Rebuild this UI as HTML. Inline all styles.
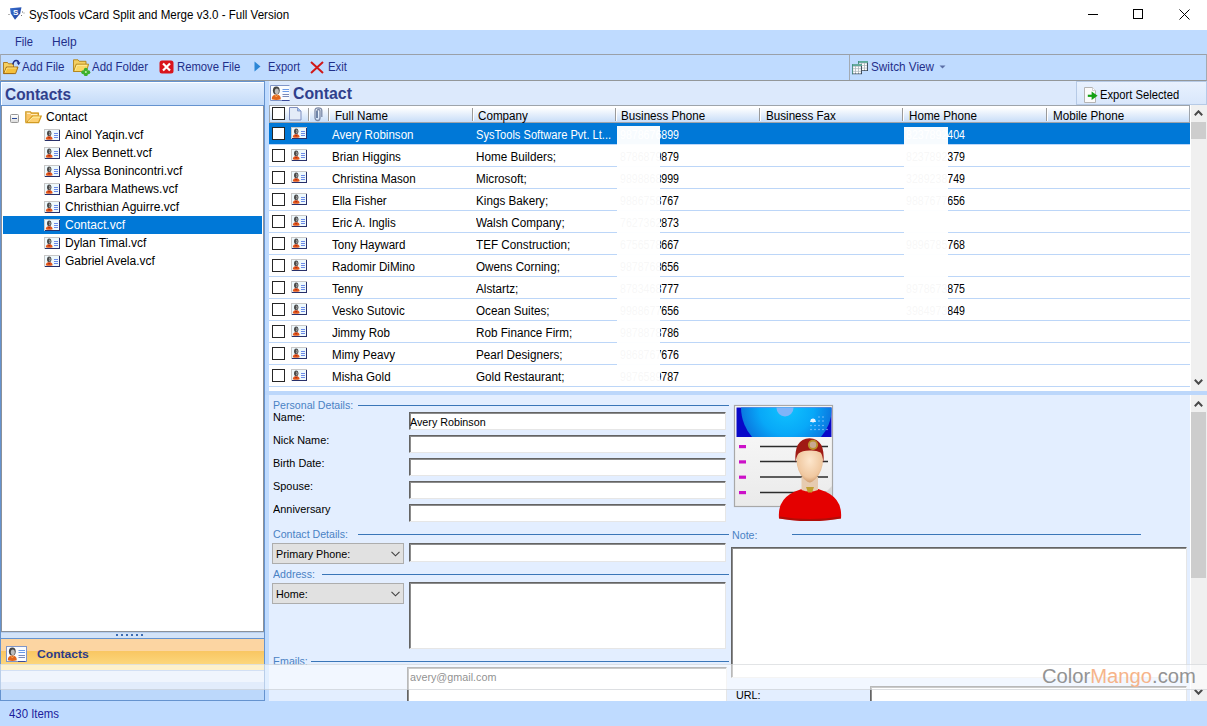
<!DOCTYPE html>
<html><head><meta charset="utf-8">
<style>
*{box-sizing:border-box;margin:0;padding:0}
html,body{width:1207px;height:726px;overflow:hidden;background:#fff;font-family:"Liberation Sans",sans-serif;font-size:12px;color:#000;position:relative}
.a{position:absolute;display:block}
.t{position:absolute;white-space:nowrap;transform-origin:0 0}
</style></head><body>

<div class="a" style="left:0px;top:0px;width:1207px;height:30px;background:#fff"></div>
<svg class="a" style="left:7px;top:6px;" width="18" height="16" viewBox="0 0 18 16"><defs><linearGradient id="sg" x1="0" y1="0" x2="1" y2="1"><stop offset="0" stop-color="#3a6fd0"/><stop offset="1" stop-color="#1c3f9a"/></linearGradient></defs><path d="M3 2.2 L14.5 1.2 L13.2 7.5 L8 13.8 L3.8 7.5 Z" fill="url(#sg)"/><text x="8.6" y="9.2" font-size="8" font-weight="bold" fill="#fff" text-anchor="middle" font-family="Liberation Sans">S</text><rect x="1.5" y="8" width="1" height="1" fill="#666"/><rect x="15" y="5.5" width="1" height="1" fill="#666"/><rect x="16.5" y="6.5" width="1" height="1" fill="#888"/><rect x="14" y="9" width="1" height="1" fill="#777"/></svg>
<div class="t" style="left:29px;top:8px;font-size:12px;line-height:14px;color:#000;transform:scaleX(0.963);">SysTools vCard Split and Merge v3.0 - Full Version</div>
<div class="a" style="left:1088px;top:14px;width:10px;height:1px;background:#000"></div>
<div class="a" style="left:1133px;top:9px;width:10px;height:10px;border:1px solid #000"></div>
<svg class="a" style="left:1179px;top:9px;" width="11" height="11" viewBox="0 0 11 11"><path d="M0.5 0.5 L10.5 10.5 M10.5 0.5 L0.5 10.5" stroke="#000" stroke-width="1"/></svg>
<div class="a" style="left:0px;top:30px;width:1207px;height:24px;background:#bfdbff"></div>
<div class="t" style="left:15px;top:35px;font-size:12px;line-height:14px;color:#1f2f8a;transform:scaleX(0.93);">File</div>
<div class="t" style="left:52px;top:35px;font-size:12px;line-height:14px;color:#1f2f8a;">Help</div>
<div class="a" style="left:0px;top:54px;width:1207px;height:27px;background:#bfdbff;border-top:1px solid #9aa0a8;border-bottom:1px solid #939799;border-right:1px solid #a3aab3"></div>
<div class="a" style="left:0px;top:54px;width:1px;height:27px;background:#a3aab3"></div>
<div class="a" style="left:849px;top:55px;width:1px;height:25px;background:#a3aab3"></div>
<div class="t" style="left:22px;top:60px;font-size:12px;line-height:14px;color:#1f2f8a;transform:scaleX(0.967);">Add File</div>
<div class="t" style="left:92px;top:60px;font-size:12px;line-height:14px;color:#1f2f8a;transform:scaleX(0.955);">Add Folder</div>
<div class="t" style="left:177px;top:60px;font-size:12px;line-height:14px;color:#1f2f8a;transform:scaleX(0.941);">Remove File</div>
<div class="t" style="left:268px;top:60px;font-size:12px;line-height:14px;color:#1f2f8a;transform:scaleX(0.923);">Export</div>
<div class="t" style="left:328px;top:60px;font-size:12px;line-height:14px;color:#1f2f8a;transform:scaleX(0.95);">Exit</div>
<div class="t" style="left:871px;top:60px;font-size:12px;line-height:14px;color:#1f2f8a;transform:scaleX(0.977);">Switch View</div>
<svg class="a" style="left:3px;top:59px;" width="18" height="16" viewBox="0 0 18 16"><path d="M0.5 3.5 H4.5 L5.5 4.8 H10.5 V14.5 H0.5 Z" fill="#f6d060" stroke="#a87418" stroke-width="0.9"/><path d="M0.7 14.6 L3.4 8 H15 L12.6 14.6 Z" fill="#f5c03c" stroke="#9c6410" stroke-width="0.9"/><path d="M2 13.4 L4 9 H13.4" stroke="#fff2a0" stroke-width="0.7" fill="none"/><path d="M9.8 5.5 Q10.6 1.4 13.2 1.4 Q15.4 1.4 15.6 3.8" stroke="#1b2a86" stroke-width="1.5" fill="none"/><path d="M13.6 3.4 L15.7 6.2 L17.5 3.2 Z" fill="#1b2a86"/></svg>
<svg class="a" style="left:73px;top:59px;" width="18" height="17" viewBox="0 0 18 17"><path d="M0.5 0.8 H5 L6.2 2.3 H13 V12.5 H0.5 Z" fill="#f3cf62" stroke="#b08218" stroke-width="0.9"/><path d="M0.7 12.5 L3.2 5.2 H15.6 L13.4 12.5 Z" fill="#fad866" stroke="#b08218" stroke-width="0.9"/><path d="M2 11.5 L4 6.3 H14" stroke="#fff4b0" stroke-width="0.7" fill="none"/><g fill="#3cb02c"><circle cx="12.8" cy="10.8" r="2"/><circle cx="15.3" cy="13.3" r="2"/><circle cx="12.8" cy="15.3" r="2"/><circle cx="10.3" cy="13.3" r="2"/></g><circle cx="12.8" cy="13.1" r="1" fill="#bff0a8"/></svg>
<svg class="a" style="left:159px;top:60px;" width="15" height="14" viewBox="0 0 15 14"><rect x="0.5" y="0.5" width="14" height="13" rx="2.5" fill="#d9141c"/><path d="M4 3.5 L11 10.5 M11 3.5 L4 10.5" stroke="#fff" stroke-width="2.2"/></svg>
<svg class="a" style="left:254px;top:61px;" width="7" height="11" viewBox="0 0 7 11"><path d="M0.5 0.5 L6.5 5.5 L0.5 10.5 Z" fill="#2b86d6"/></svg>
<svg class="a" style="left:310px;top:61px;" width="14" height="13" viewBox="0 0 14 13"><path d="M1 1 L13 12 M13 1 L1 12" stroke="#d01818" stroke-width="2"/></svg>
<svg class="a" style="left:851px;top:60px;" width="18" height="15" viewBox="0 0 18 15"><rect x="7" y="1" width="10" height="10" fill="#2b3a4c"/><rect x="7" y="1" width="9.2" height="9.2" fill="#a9b3ba"/><rect x="7" y="1" width="10" height="1.8" fill="#5eab9a"/><rect x="7" y="1" width="0.8" height="10" fill="#3d8a7c"/><rect x="8.2" y="3.4" width="2" height="1.8" fill="#fff"/><rect x="11.0" y="3.4" width="2" height="1.8" fill="#fff"/><rect x="13.8" y="3.4" width="2" height="1.8" fill="#fff"/><rect x="8.2" y="5.9" width="2" height="1.8" fill="#fff"/><rect x="11.0" y="5.9" width="2" height="1.8" fill="#fff"/><rect x="13.8" y="5.9" width="2" height="1.8" fill="#fff"/><rect x="8.2" y="8.4" width="2" height="1.8" fill="#fff"/><rect x="11.0" y="8.4" width="2" height="1.8" fill="#fff"/><rect x="13.8" y="8.4" width="2" height="1.8" fill="#fff"/><rect x="1" y="4.2" width="10" height="10" fill="#2b3a4c"/><rect x="1" y="4.2" width="9.2" height="9.2" fill="#a9b3ba"/><rect x="1" y="4.2" width="10" height="1.8" fill="#5eab9a"/><rect x="1" y="4.2" width="0.8" height="10" fill="#3d8a7c"/><rect x="2.2" y="6.6" width="2" height="1.8" fill="#fff"/><rect x="5.0" y="6.6" width="2" height="1.8" fill="#fff"/><rect x="7.8" y="6.6" width="2" height="1.8" fill="#fff"/><rect x="2.2" y="9.1" width="2" height="1.8" fill="#fff"/><rect x="5.0" y="9.1" width="2" height="1.8" fill="#fff"/><rect x="7.8" y="9.1" width="2" height="1.8" fill="#fff"/><rect x="2.2" y="11.6" width="2" height="1.8" fill="#fff"/><rect x="5.0" y="11.6" width="2" height="1.8" fill="#fff"/><rect x="7.8" y="11.6" width="2" height="1.8" fill="#fff"/></svg>
<svg class="a" style="left:939px;top:65px;" width="7" height="5" viewBox="0 0 7 5"><path d="M0.5 0.5 L6.5 0.5 L3.5 3.5 Z" fill="#5b6fa6"/></svg>
<div class="a" style="left:0px;top:81px;width:265px;height:620px;background:#bfdbff;border:1px solid #6593cf"></div>
<div class="a" style="left:1px;top:82px;width:263px;height:23px;background:linear-gradient(#e3efff,#c4dbf8);border-top:1px solid #fff;border-left:1px solid #fff"></div>
<div class="a" style="left:1px;top:105px;width:263px;height:1px;background:#6593cf"></div>
<div class="t" style="left:5px;top:86px;font-size:16px;line-height:18px;color:#30408c;font-weight:bold;transform:scaleX(0.964);">Contacts</div>
<div class="a" style="left:1px;top:106px;width:263px;height:526px;background:#fff;border:1px solid #8a9099;border-top:0"></div>
<div class="a" style="left:10px;top:114px;width:9px;height:9px;border:1px solid #969696;border-radius:1.5px;background:linear-gradient(#fff,#dcdcdc)"></div>
<div class="a" style="left:12px;top:118px;width:5px;height:1px;background:#2a4a9a"></div>
<svg class="a" style="left:25px;top:111px;" width="17" height="14" viewBox="0 0 17 14"><rect x="1.2" y="1.5" width="12" height="10" fill="#fcc565"/><path d="M2 2.3 H5 L6 3.3 H12.6" stroke="#fff4d0" stroke-width="1" fill="none"/><path d="M0.8 11.8 V0.9 H5.4 L6.5 2.1 H13.4 V4.8" fill="none" stroke="#d19b22" stroke-width="1.3"/><path d="M1.6 11.6 L7.4 5 H16.3 L13.6 11.6 Z" fill="#fdcf70" stroke="#d19b22" stroke-width="1.2"/><path d="M3 10.6 L7.9 6.1 H15" stroke="#fff6a8" stroke-width="0.9" fill="none"/></svg>
<div class="t" style="left:46px;top:110px;font-size:12px;line-height:14px;color:#000;transform:scaleX(1.0);">Contact</div>
<svg class="a" style="left:44px;top:129px;" width="16" height="12" viewBox="0 0 16 12"><rect x="0" y="0" width="16" height="12" fill="#c8c8c8"/><rect x="1" y="1" width="15" height="11" fill="#28306a"/><rect x="1" y="1" width="14" height="10" fill="#eef8fc"/><ellipse cx="5.2" cy="4.3" rx="2.2" ry="2.9" fill="#4a4a4a"/><path d="M5.6 2.8 Q6.6 4 5.6 6.2" stroke="#c8c8c8" stroke-width="0.9" fill="none"/><path d="M1.8 10.2 Q1.8 7.2 5.2 7.2 Q8.6 7.2 8.6 10.2 Q5.2 11.2 1.8 10.2 Z" fill="#e2561a"/><path d="M4.1 7.4 L5.2 9.2 L6.3 7.4" stroke="#a8200a" stroke-width="0.8" fill="none"/><path d="M10 4.5 H14 M10 6.5 H14 M10 8.5 H14" stroke="#6a8ae8" stroke-width="1"/></svg>
<div class="t" style="left:65px;top:128px;font-size:12px;line-height:14px;color:#000;transform:scaleX(1.0);">Ainol Yaqin.vcf</div>
<svg class="a" style="left:44px;top:147px;" width="16" height="12" viewBox="0 0 16 12"><rect x="0" y="0" width="16" height="12" fill="#c8c8c8"/><rect x="1" y="1" width="15" height="11" fill="#28306a"/><rect x="1" y="1" width="14" height="10" fill="#eef8fc"/><ellipse cx="5.2" cy="4.3" rx="2.2" ry="2.9" fill="#4a4a4a"/><path d="M5.6 2.8 Q6.6 4 5.6 6.2" stroke="#c8c8c8" stroke-width="0.9" fill="none"/><path d="M1.8 10.2 Q1.8 7.2 5.2 7.2 Q8.6 7.2 8.6 10.2 Q5.2 11.2 1.8 10.2 Z" fill="#e2561a"/><path d="M4.1 7.4 L5.2 9.2 L6.3 7.4" stroke="#a8200a" stroke-width="0.8" fill="none"/><path d="M10 4.5 H14 M10 6.5 H14 M10 8.5 H14" stroke="#6a8ae8" stroke-width="1"/></svg>
<div class="t" style="left:65px;top:146px;font-size:12px;line-height:14px;color:#000;transform:scaleX(1.0);">Alex Bennett.vcf</div>
<svg class="a" style="left:44px;top:165px;" width="16" height="12" viewBox="0 0 16 12"><rect x="0" y="0" width="16" height="12" fill="#c8c8c8"/><rect x="1" y="1" width="15" height="11" fill="#28306a"/><rect x="1" y="1" width="14" height="10" fill="#eef8fc"/><ellipse cx="5.2" cy="4.3" rx="2.2" ry="2.9" fill="#4a4a4a"/><path d="M5.6 2.8 Q6.6 4 5.6 6.2" stroke="#c8c8c8" stroke-width="0.9" fill="none"/><path d="M1.8 10.2 Q1.8 7.2 5.2 7.2 Q8.6 7.2 8.6 10.2 Q5.2 11.2 1.8 10.2 Z" fill="#e2561a"/><path d="M4.1 7.4 L5.2 9.2 L6.3 7.4" stroke="#a8200a" stroke-width="0.8" fill="none"/><path d="M10 4.5 H14 M10 6.5 H14 M10 8.5 H14" stroke="#6a8ae8" stroke-width="1"/></svg>
<div class="t" style="left:65px;top:164px;font-size:12px;line-height:14px;color:#000;transform:scaleX(1.0);">Alyssa Bonincontri.vcf</div>
<svg class="a" style="left:44px;top:183px;" width="16" height="12" viewBox="0 0 16 12"><rect x="0" y="0" width="16" height="12" fill="#c8c8c8"/><rect x="1" y="1" width="15" height="11" fill="#28306a"/><rect x="1" y="1" width="14" height="10" fill="#eef8fc"/><ellipse cx="5.2" cy="4.3" rx="2.2" ry="2.9" fill="#4a4a4a"/><path d="M5.6 2.8 Q6.6 4 5.6 6.2" stroke="#c8c8c8" stroke-width="0.9" fill="none"/><path d="M1.8 10.2 Q1.8 7.2 5.2 7.2 Q8.6 7.2 8.6 10.2 Q5.2 11.2 1.8 10.2 Z" fill="#e2561a"/><path d="M4.1 7.4 L5.2 9.2 L6.3 7.4" stroke="#a8200a" stroke-width="0.8" fill="none"/><path d="M10 4.5 H14 M10 6.5 H14 M10 8.5 H14" stroke="#6a8ae8" stroke-width="1"/></svg>
<div class="t" style="left:65px;top:182px;font-size:12px;line-height:14px;color:#000;transform:scaleX(1.0);">Barbara Mathews.vcf</div>
<svg class="a" style="left:44px;top:201px;" width="16" height="12" viewBox="0 0 16 12"><rect x="0" y="0" width="16" height="12" fill="#c8c8c8"/><rect x="1" y="1" width="15" height="11" fill="#28306a"/><rect x="1" y="1" width="14" height="10" fill="#eef8fc"/><ellipse cx="5.2" cy="4.3" rx="2.2" ry="2.9" fill="#4a4a4a"/><path d="M5.6 2.8 Q6.6 4 5.6 6.2" stroke="#c8c8c8" stroke-width="0.9" fill="none"/><path d="M1.8 10.2 Q1.8 7.2 5.2 7.2 Q8.6 7.2 8.6 10.2 Q5.2 11.2 1.8 10.2 Z" fill="#e2561a"/><path d="M4.1 7.4 L5.2 9.2 L6.3 7.4" stroke="#a8200a" stroke-width="0.8" fill="none"/><path d="M10 4.5 H14 M10 6.5 H14 M10 8.5 H14" stroke="#6a8ae8" stroke-width="1"/></svg>
<div class="t" style="left:65px;top:200px;font-size:12px;line-height:14px;color:#000;transform:scaleX(1.0);">Christhian Aguirre.vcf</div>
<div class="a" style="left:3px;top:216px;width:259px;height:18px;background:#0078d7"></div>
<svg class="a" style="left:44px;top:219px;" width="16" height="12" viewBox="0 0 16 12"><rect x="0" y="0" width="16" height="12" fill="#c8c8c8"/><rect x="1" y="1" width="15" height="11" fill="#28306a"/><rect x="1" y="1" width="14" height="10" fill="#eef8fc"/><ellipse cx="5.2" cy="4.3" rx="2.2" ry="2.9" fill="#4a4a4a"/><path d="M5.6 2.8 Q6.6 4 5.6 6.2" stroke="#c8c8c8" stroke-width="0.9" fill="none"/><path d="M1.8 10.2 Q1.8 7.2 5.2 7.2 Q8.6 7.2 8.6 10.2 Q5.2 11.2 1.8 10.2 Z" fill="#e2561a"/><path d="M4.1 7.4 L5.2 9.2 L6.3 7.4" stroke="#a8200a" stroke-width="0.8" fill="none"/><path d="M10 4.5 H14 M10 6.5 H14 M10 8.5 H14" stroke="#6a8ae8" stroke-width="1"/></svg>
<div class="t" style="left:65px;top:218px;font-size:12px;line-height:14px;color:#fff;transform:scaleX(1.0);">Contact.vcf</div>
<svg class="a" style="left:44px;top:237px;" width="16" height="12" viewBox="0 0 16 12"><rect x="0" y="0" width="16" height="12" fill="#c8c8c8"/><rect x="1" y="1" width="15" height="11" fill="#28306a"/><rect x="1" y="1" width="14" height="10" fill="#eef8fc"/><ellipse cx="5.2" cy="4.3" rx="2.2" ry="2.9" fill="#4a4a4a"/><path d="M5.6 2.8 Q6.6 4 5.6 6.2" stroke="#c8c8c8" stroke-width="0.9" fill="none"/><path d="M1.8 10.2 Q1.8 7.2 5.2 7.2 Q8.6 7.2 8.6 10.2 Q5.2 11.2 1.8 10.2 Z" fill="#e2561a"/><path d="M4.1 7.4 L5.2 9.2 L6.3 7.4" stroke="#a8200a" stroke-width="0.8" fill="none"/><path d="M10 4.5 H14 M10 6.5 H14 M10 8.5 H14" stroke="#6a8ae8" stroke-width="1"/></svg>
<div class="t" style="left:65px;top:236px;font-size:12px;line-height:14px;color:#000;transform:scaleX(1.0);">Dylan Timal.vcf</div>
<svg class="a" style="left:44px;top:255px;" width="16" height="12" viewBox="0 0 16 12"><rect x="0" y="0" width="16" height="12" fill="#c8c8c8"/><rect x="1" y="1" width="15" height="11" fill="#28306a"/><rect x="1" y="1" width="14" height="10" fill="#eef8fc"/><ellipse cx="5.2" cy="4.3" rx="2.2" ry="2.9" fill="#4a4a4a"/><path d="M5.6 2.8 Q6.6 4 5.6 6.2" stroke="#c8c8c8" stroke-width="0.9" fill="none"/><path d="M1.8 10.2 Q1.8 7.2 5.2 7.2 Q8.6 7.2 8.6 10.2 Q5.2 11.2 1.8 10.2 Z" fill="#e2561a"/><path d="M4.1 7.4 L5.2 9.2 L6.3 7.4" stroke="#a8200a" stroke-width="0.8" fill="none"/><path d="M10 4.5 H14 M10 6.5 H14 M10 8.5 H14" stroke="#6a8ae8" stroke-width="1"/></svg>
<div class="t" style="left:65px;top:254px;font-size:12px;line-height:14px;color:#000;transform:scaleX(1.0);">Gabriel Avela.vcf</div>
<div class="a" style="left:1px;top:632px;width:263px;height:6px;background:#d3e3f8;border-top:1px solid #b4cdef"></div>
<div class="a" style="left:116px;top:634px;width:2px;height:2px;background:#3c6cb4"></div>
<div class="a" style="left:121px;top:634px;width:2px;height:2px;background:#3c6cb4"></div>
<div class="a" style="left:126px;top:634px;width:2px;height:2px;background:#3c6cb4"></div>
<div class="a" style="left:131px;top:634px;width:2px;height:2px;background:#3c6cb4"></div>
<div class="a" style="left:136px;top:634px;width:2px;height:2px;background:#3c6cb4"></div>
<div class="a" style="left:141px;top:634px;width:2px;height:2px;background:#3c6cb4"></div>
<div class="a" style="left:1px;top:638px;width:263px;height:1px;background:#6593cf"></div>
<div class="a" style="left:1px;top:639px;width:263px;height:12px;background:#fcd5a2"></div>
<div class="a" style="left:1px;top:651px;width:263px;height:13px;background:linear-gradient(#f9c662,#fcd67c)"></div>
<div class="a" style="left:1px;top:664px;width:263px;height:1px;background:#fdf0c8"></div>
<div class="a" style="left:1px;top:665px;width:263px;height:5px;background:#fadf8e"></div>
<div class="a" style="left:1px;top:670px;width:263px;height:1px;background:#9dbbe6"></div>
<div class="a" style="left:1px;top:671px;width:263px;height:11px;background:#dee9fb"></div>
<div class="a" style="left:1px;top:682px;width:263px;height:7px;background:#bfd5f6"></div>
<div class="a" style="left:1px;top:689px;width:263px;height:11px;background:#bcd8fb"></div>
<svg class="a" style="left:6px;top:646px;" width="21" height="16" viewBox="0 0 21 16"><rect x="0.5" y="0.5" width="20" height="15" fill="#fafcff" stroke="#7f95c8" stroke-width="1"/><path d="M12 15.5 H19.5" stroke="#3a4a9a" stroke-width="1"/><ellipse cx="6.3" cy="5.6" rx="3.4" ry="4" fill="#444"/><ellipse cx="6.8" cy="6.2" rx="2" ry="2.8" fill="#bdbdbd"/><path d="M1.8 14.2 Q1.8 9.6 6.3 9.6 Q10.8 9.6 10.8 14.2 Q6.3 15.6 1.8 14.2 Z" fill="#e2661c"/><path d="M4.8 9.8 L6.3 12 L7.8 9.8" stroke="#f5b060" stroke-width="0.8" fill="none"/><path d="M12.5 4.5 H19 M12.5 6.5 H19" stroke="#6a9ae8" stroke-width="1"/><path d="M12.5 9.5 H19 M12.5 11.5 H19" stroke="#7a8ab8" stroke-width="1.1"/></svg>
<div class="t" style="left:37px;top:647px;font-size:11px;line-height:14px;color:#2b3a8a;font-weight:bold;transform:scaleX(1.1);">Contacts</div>
<div class="a" style="left:0px;top:701px;width:1207px;height:25px;background:#bfdbff"></div>
<div class="t" style="left:9px;top:707px;font-size:12px;line-height:14px;color:#1c1c9c;transform:scaleX(0.95);">430 Items</div>
<div class="a" style="left:265px;top:81px;width:4px;height:620px;background:#bfdbff"></div>
<div class="a" style="left:265px;top:81px;width:942px;height:25px;background:#bfdbff"></div>
<div class="a" style="left:269px;top:81px;width:938px;height:24px;background:#dce9fc"></div>
<svg class="a" style="left:270px;top:85px;" width="20" height="16" viewBox="0 0 20 16"><path d="M19.5 0.5 H0.5 V15.5 H19.5" fill="#fafcff" stroke="#7f95c8" stroke-width="1"/><path d="M12 15.5 H19.5" stroke="#3a4a9a" stroke-width="1"/><ellipse cx="6.3" cy="5.6" rx="3.4" ry="4" fill="#444"/><ellipse cx="6.8" cy="6.2" rx="2" ry="2.8" fill="#bdbdbd"/><path d="M1.8 14.2 Q1.8 9.6 6.3 9.6 Q10.8 9.6 10.8 14.2 Q6.3 15.6 1.8 14.2 Z" fill="#e2661c"/><path d="M4.8 9.8 L6.3 12 L7.8 9.8" stroke="#f5b060" stroke-width="0.8" fill="none"/><path d="M12.5 4.5 H19 M12.5 6.5 H19" stroke="#6a9ae8" stroke-width="1"/><path d="M12.5 9.5 H19 M12.5 11.5 H19" stroke="#7a8ab8" stroke-width="1.1"/></svg>
<div class="t" style="left:293px;top:85px;font-size:16px;line-height:18px;color:#30408c;font-weight:bold;transform:scaleX(0.99);">Contact</div>
<div class="a" style="left:1076px;top:81px;width:131px;height:24px;background:linear-gradient(#e8f1fe,#d9e7fb);border:1px solid #b6cae6"></div>
<svg class="a" style="left:1084px;top:87px;" width="15" height="17" viewBox="0 0 15 17"><path d="M0.5 0.5 H8.5 L11.5 3.5 V15.5 H0.5 Z" fill="#fbfbfb" stroke="#b4b4b4" stroke-width="1"/><path d="M8.5 0.5 V3.5 H11.5" fill="#fff" stroke="#c4c4c4" stroke-width="0.8"/><path d="M3.8 8.8 H9" stroke="#12a012" stroke-width="2.2"/><path d="M7.6 4.6 L13.6 8.8 L7.6 13 Z" fill="#14a014"/></svg>
<div class="t" style="left:1100px;top:88px;font-size:12px;line-height:14px;color:#000;transform:scaleX(0.935);">Export Selected</div>
<div class="a" style="left:269px;top:106px;width:922px;height:285px;background:#fff"></div>
<div class="a" style="left:269px;top:105px;width:921px;height:18px;background:linear-gradient(#ffffff 10%,#c8ddf8);border-top:1px solid #9ea4ab;border-bottom:1px solid #9ea4ab;border-left:1px solid #9ea4ab;border-right:1px solid #9ea4ab"></div>
<div class="a" style="left:308px;top:108px;width:1px;height:13px;background:#9a9a9a"></div>
<div class="a" style="left:309px;top:108px;width:1px;height:13px;background:#fff"></div>
<div class="a" style="left:328px;top:108px;width:1px;height:13px;background:#9a9a9a"></div>
<div class="a" style="left:329px;top:108px;width:1px;height:13px;background:#fff"></div>
<div class="a" style="left:472px;top:108px;width:1px;height:13px;background:#9a9a9a"></div>
<div class="a" style="left:473px;top:108px;width:1px;height:13px;background:#fff"></div>
<div class="a" style="left:615px;top:108px;width:1px;height:13px;background:#9a9a9a"></div>
<div class="a" style="left:616px;top:108px;width:1px;height:13px;background:#fff"></div>
<div class="a" style="left:759px;top:108px;width:1px;height:13px;background:#9a9a9a"></div>
<div class="a" style="left:760px;top:108px;width:1px;height:13px;background:#fff"></div>
<div class="a" style="left:902px;top:108px;width:1px;height:13px;background:#9a9a9a"></div>
<div class="a" style="left:903px;top:108px;width:1px;height:13px;background:#fff"></div>
<div class="a" style="left:1046px;top:108px;width:1px;height:13px;background:#9a9a9a"></div>
<div class="a" style="left:1047px;top:108px;width:1px;height:13px;background:#fff"></div>
<div class="a" style="left:272px;top:107px;width:13px;height:13px;background:#fff;border:1px solid #262626"></div>
<svg class="a" style="left:289px;top:107px;" width="13" height="14" viewBox="0 0 13 14"><path d="M0.5 0.5 L8.5 0.5 L12 4 L12 13 L0.5 13 Z" fill="#e4ecf8" stroke="#7f8fbf" stroke-width="1"/><path d="M8.5 0.5 L8.5 4 L12 4" fill="#9cc0f0" stroke="#7f8fbf" stroke-width="0.8"/></svg>
<svg class="a" style="left:313px;top:107px;" width="11" height="15" viewBox="0 0 11 15"><path d="M4 11 V4 Q4 2.5 5.5 2.5 Q7 2.5 7 4 V10.5 Q7 13.5 5 13.5 Q2 13.5 2 10.5 V3.5 Q2 0.8 5.2 0.8 Q8.8 0.8 8.8 3.5 V10" stroke="#7c8aa8" stroke-width="1.3" fill="none"/><path d="M4 11 V4" stroke="#3a5a8a" stroke-width="1"/></svg>
<div class="t" style="left:335px;top:109px;font-size:12px;line-height:14px;color:#000;transform:scaleX(0.97);">Full Name</div>
<div class="t" style="left:478px;top:109px;font-size:12px;line-height:14px;color:#000;transform:scaleX(0.97);">Company</div>
<div class="t" style="left:621px;top:109px;font-size:12px;line-height:14px;color:#000;transform:scaleX(0.97);">Business Phone</div>
<div class="t" style="left:766px;top:109px;font-size:12px;line-height:14px;color:#000;transform:scaleX(0.97);">Business Fax</div>
<div class="t" style="left:909px;top:109px;font-size:12px;line-height:14px;color:#000;transform:scaleX(0.97);">Home Phone</div>
<div class="t" style="left:1053px;top:109px;font-size:12px;line-height:14px;color:#000;transform:scaleX(0.97);">Mobile Phone</div>
<div class="a" style="left:269px;top:123px;width:921px;height:21px;background:#0078d7"></div>
<div class="a" style="left:269px;top:144px;width:921px;height:1px;background:#bcd6f8"></div>
<div class="a" style="left:272px;top:127px;width:13px;height:13px;background:#fff;border:1px solid #262626"></div>
<svg class="a" style="left:291px;top:127px;" width="16" height="12" viewBox="0 0 16 12"><rect x="0" y="0" width="16" height="12" fill="#c8c8c8"/><rect x="1" y="1" width="15" height="11" fill="#28306a"/><rect x="1" y="1" width="14" height="10" fill="#eef8fc"/><ellipse cx="5.2" cy="4.3" rx="2.2" ry="2.9" fill="#4a4a4a"/><path d="M5.6 2.8 Q6.6 4 5.6 6.2" stroke="#c8c8c8" stroke-width="0.9" fill="none"/><path d="M1.8 10.2 Q1.8 7.2 5.2 7.2 Q8.6 7.2 8.6 10.2 Q5.2 11.2 1.8 10.2 Z" fill="#e2561a"/><path d="M4.1 7.4 L5.2 9.2 L6.3 7.4" stroke="#a8200a" stroke-width="0.8" fill="none"/><path d="M10 4.5 H14 M10 6.5 H14 M10 8.5 H14" stroke="#6a8ae8" stroke-width="1"/></svg>
<div class="t" style="left:332px;top:128px;font-size:12px;line-height:14px;color:#fff;transform:scaleX(0.965);">Avery Robinson</div>
<div class="t" style="left:476px;top:128px;font-size:12px;line-height:14px;color:#fff;transform:scaleX(0.925);">SysTools Software Pvt. Lt...</div>
<div class="t" style="left:620px;top:128px;font-size:12px;line-height:14px;color:#fff;transform:scaleX(0.884);">9878676899</div>
<div class="t" style="left:906px;top:128px;font-size:12px;line-height:14px;color:#fff;transform:scaleX(0.884);">8237892404</div>
<div class="a" style="left:269px;top:166px;width:921px;height:1px;background:#bcd6f8"></div>
<div class="a" style="left:272px;top:149px;width:13px;height:13px;background:#fff;border:1px solid #262626"></div>
<svg class="a" style="left:291px;top:149px;" width="16" height="12" viewBox="0 0 16 12"><rect x="0" y="0" width="16" height="12" fill="#c8c8c8"/><rect x="1" y="1" width="15" height="11" fill="#28306a"/><rect x="1" y="1" width="14" height="10" fill="#eef8fc"/><ellipse cx="5.2" cy="4.3" rx="2.2" ry="2.9" fill="#4a4a4a"/><path d="M5.6 2.8 Q6.6 4 5.6 6.2" stroke="#c8c8c8" stroke-width="0.9" fill="none"/><path d="M1.8 10.2 Q1.8 7.2 5.2 7.2 Q8.6 7.2 8.6 10.2 Q5.2 11.2 1.8 10.2 Z" fill="#e2561a"/><path d="M4.1 7.4 L5.2 9.2 L6.3 7.4" stroke="#a8200a" stroke-width="0.8" fill="none"/><path d="M10 4.5 H14 M10 6.5 H14 M10 8.5 H14" stroke="#6a8ae8" stroke-width="1"/></svg>
<div class="t" style="left:332px;top:150px;font-size:12px;line-height:14px;color:#000;transform:scaleX(0.965);">Brian Higgins</div>
<div class="t" style="left:476px;top:150px;font-size:12px;line-height:14px;color:#000;transform:scaleX(0.975);">Home Builders;</div>
<div class="t" style="left:620px;top:150px;font-size:12px;line-height:14px;color:#000;transform:scaleX(0.884);">8786879879</div>
<div class="t" style="left:906px;top:150px;font-size:12px;line-height:14px;color:#000;transform:scaleX(0.884);">8237892379</div>
<div class="a" style="left:269px;top:188px;width:921px;height:1px;background:#bcd6f8"></div>
<div class="a" style="left:272px;top:171px;width:13px;height:13px;background:#fff;border:1px solid #262626"></div>
<svg class="a" style="left:291px;top:171px;" width="16" height="12" viewBox="0 0 16 12"><rect x="0" y="0" width="16" height="12" fill="#c8c8c8"/><rect x="1" y="1" width="15" height="11" fill="#28306a"/><rect x="1" y="1" width="14" height="10" fill="#eef8fc"/><ellipse cx="5.2" cy="4.3" rx="2.2" ry="2.9" fill="#4a4a4a"/><path d="M5.6 2.8 Q6.6 4 5.6 6.2" stroke="#c8c8c8" stroke-width="0.9" fill="none"/><path d="M1.8 10.2 Q1.8 7.2 5.2 7.2 Q8.6 7.2 8.6 10.2 Q5.2 11.2 1.8 10.2 Z" fill="#e2561a"/><path d="M4.1 7.4 L5.2 9.2 L6.3 7.4" stroke="#a8200a" stroke-width="0.8" fill="none"/><path d="M10 4.5 H14 M10 6.5 H14 M10 8.5 H14" stroke="#6a8ae8" stroke-width="1"/></svg>
<div class="t" style="left:332px;top:172px;font-size:12px;line-height:14px;color:#000;transform:scaleX(0.965);">Christina Mason</div>
<div class="t" style="left:476px;top:172px;font-size:12px;line-height:14px;color:#000;transform:scaleX(0.975);">Microsoft;</div>
<div class="t" style="left:620px;top:172px;font-size:12px;line-height:14px;color:#000;transform:scaleX(0.884);">9898868999</div>
<div class="t" style="left:906px;top:172px;font-size:12px;line-height:14px;color:#000;transform:scaleX(0.884);">3289238749</div>
<div class="a" style="left:269px;top:210px;width:921px;height:1px;background:#bcd6f8"></div>
<div class="a" style="left:272px;top:193px;width:13px;height:13px;background:#fff;border:1px solid #262626"></div>
<svg class="a" style="left:291px;top:193px;" width="16" height="12" viewBox="0 0 16 12"><rect x="0" y="0" width="16" height="12" fill="#c8c8c8"/><rect x="1" y="1" width="15" height="11" fill="#28306a"/><rect x="1" y="1" width="14" height="10" fill="#eef8fc"/><ellipse cx="5.2" cy="4.3" rx="2.2" ry="2.9" fill="#4a4a4a"/><path d="M5.6 2.8 Q6.6 4 5.6 6.2" stroke="#c8c8c8" stroke-width="0.9" fill="none"/><path d="M1.8 10.2 Q1.8 7.2 5.2 7.2 Q8.6 7.2 8.6 10.2 Q5.2 11.2 1.8 10.2 Z" fill="#e2561a"/><path d="M4.1 7.4 L5.2 9.2 L6.3 7.4" stroke="#a8200a" stroke-width="0.8" fill="none"/><path d="M10 4.5 H14 M10 6.5 H14 M10 8.5 H14" stroke="#6a8ae8" stroke-width="1"/></svg>
<div class="t" style="left:332px;top:194px;font-size:12px;line-height:14px;color:#000;transform:scaleX(0.965);">Ella Fisher</div>
<div class="t" style="left:476px;top:194px;font-size:12px;line-height:14px;color:#000;transform:scaleX(0.975);">Kings Bakery;</div>
<div class="t" style="left:620px;top:194px;font-size:12px;line-height:14px;color:#000;transform:scaleX(0.884);">9886758767</div>
<div class="t" style="left:906px;top:194px;font-size:12px;line-height:14px;color:#000;transform:scaleX(0.884);">9887677656</div>
<div class="a" style="left:269px;top:232px;width:921px;height:1px;background:#bcd6f8"></div>
<div class="a" style="left:272px;top:215px;width:13px;height:13px;background:#fff;border:1px solid #262626"></div>
<svg class="a" style="left:291px;top:215px;" width="16" height="12" viewBox="0 0 16 12"><rect x="0" y="0" width="16" height="12" fill="#c8c8c8"/><rect x="1" y="1" width="15" height="11" fill="#28306a"/><rect x="1" y="1" width="14" height="10" fill="#eef8fc"/><ellipse cx="5.2" cy="4.3" rx="2.2" ry="2.9" fill="#4a4a4a"/><path d="M5.6 2.8 Q6.6 4 5.6 6.2" stroke="#c8c8c8" stroke-width="0.9" fill="none"/><path d="M1.8 10.2 Q1.8 7.2 5.2 7.2 Q8.6 7.2 8.6 10.2 Q5.2 11.2 1.8 10.2 Z" fill="#e2561a"/><path d="M4.1 7.4 L5.2 9.2 L6.3 7.4" stroke="#a8200a" stroke-width="0.8" fill="none"/><path d="M10 4.5 H14 M10 6.5 H14 M10 8.5 H14" stroke="#6a8ae8" stroke-width="1"/></svg>
<div class="t" style="left:332px;top:216px;font-size:12px;line-height:14px;color:#000;transform:scaleX(0.965);">Eric A. Inglis</div>
<div class="t" style="left:476px;top:216px;font-size:12px;line-height:14px;color:#000;transform:scaleX(0.975);">Walsh Company;</div>
<div class="t" style="left:620px;top:216px;font-size:12px;line-height:14px;color:#000;transform:scaleX(0.884);">7627362873</div>
<div class="a" style="left:269px;top:254px;width:921px;height:1px;background:#bcd6f8"></div>
<div class="a" style="left:272px;top:237px;width:13px;height:13px;background:#fff;border:1px solid #262626"></div>
<svg class="a" style="left:291px;top:237px;" width="16" height="12" viewBox="0 0 16 12"><rect x="0" y="0" width="16" height="12" fill="#c8c8c8"/><rect x="1" y="1" width="15" height="11" fill="#28306a"/><rect x="1" y="1" width="14" height="10" fill="#eef8fc"/><ellipse cx="5.2" cy="4.3" rx="2.2" ry="2.9" fill="#4a4a4a"/><path d="M5.6 2.8 Q6.6 4 5.6 6.2" stroke="#c8c8c8" stroke-width="0.9" fill="none"/><path d="M1.8 10.2 Q1.8 7.2 5.2 7.2 Q8.6 7.2 8.6 10.2 Q5.2 11.2 1.8 10.2 Z" fill="#e2561a"/><path d="M4.1 7.4 L5.2 9.2 L6.3 7.4" stroke="#a8200a" stroke-width="0.8" fill="none"/><path d="M10 4.5 H14 M10 6.5 H14 M10 8.5 H14" stroke="#6a8ae8" stroke-width="1"/></svg>
<div class="t" style="left:332px;top:238px;font-size:12px;line-height:14px;color:#000;transform:scaleX(0.965);">Tony Hayward</div>
<div class="t" style="left:476px;top:238px;font-size:12px;line-height:14px;color:#000;transform:scaleX(0.975);">TEF Construction;</div>
<div class="t" style="left:620px;top:238px;font-size:12px;line-height:14px;color:#000;transform:scaleX(0.884);">6756578667</div>
<div class="t" style="left:906px;top:238px;font-size:12px;line-height:14px;color:#000;transform:scaleX(0.884);">9896785768</div>
<div class="a" style="left:269px;top:276px;width:921px;height:1px;background:#bcd6f8"></div>
<div class="a" style="left:272px;top:259px;width:13px;height:13px;background:#fff;border:1px solid #262626"></div>
<svg class="a" style="left:291px;top:259px;" width="16" height="12" viewBox="0 0 16 12"><rect x="0" y="0" width="16" height="12" fill="#c8c8c8"/><rect x="1" y="1" width="15" height="11" fill="#28306a"/><rect x="1" y="1" width="14" height="10" fill="#eef8fc"/><ellipse cx="5.2" cy="4.3" rx="2.2" ry="2.9" fill="#4a4a4a"/><path d="M5.6 2.8 Q6.6 4 5.6 6.2" stroke="#c8c8c8" stroke-width="0.9" fill="none"/><path d="M1.8 10.2 Q1.8 7.2 5.2 7.2 Q8.6 7.2 8.6 10.2 Q5.2 11.2 1.8 10.2 Z" fill="#e2561a"/><path d="M4.1 7.4 L5.2 9.2 L6.3 7.4" stroke="#a8200a" stroke-width="0.8" fill="none"/><path d="M10 4.5 H14 M10 6.5 H14 M10 8.5 H14" stroke="#6a8ae8" stroke-width="1"/></svg>
<div class="t" style="left:332px;top:260px;font-size:12px;line-height:14px;color:#000;transform:scaleX(0.965);">Radomir DiMino</div>
<div class="t" style="left:476px;top:260px;font-size:12px;line-height:14px;color:#000;transform:scaleX(0.975);">Owens Corning;</div>
<div class="t" style="left:620px;top:260px;font-size:12px;line-height:14px;color:#000;transform:scaleX(0.884);">9878768656</div>
<div class="a" style="left:269px;top:298px;width:921px;height:1px;background:#bcd6f8"></div>
<div class="a" style="left:272px;top:281px;width:13px;height:13px;background:#fff;border:1px solid #262626"></div>
<svg class="a" style="left:291px;top:281px;" width="16" height="12" viewBox="0 0 16 12"><rect x="0" y="0" width="16" height="12" fill="#c8c8c8"/><rect x="1" y="1" width="15" height="11" fill="#28306a"/><rect x="1" y="1" width="14" height="10" fill="#eef8fc"/><ellipse cx="5.2" cy="4.3" rx="2.2" ry="2.9" fill="#4a4a4a"/><path d="M5.6 2.8 Q6.6 4 5.6 6.2" stroke="#c8c8c8" stroke-width="0.9" fill="none"/><path d="M1.8 10.2 Q1.8 7.2 5.2 7.2 Q8.6 7.2 8.6 10.2 Q5.2 11.2 1.8 10.2 Z" fill="#e2561a"/><path d="M4.1 7.4 L5.2 9.2 L6.3 7.4" stroke="#a8200a" stroke-width="0.8" fill="none"/><path d="M10 4.5 H14 M10 6.5 H14 M10 8.5 H14" stroke="#6a8ae8" stroke-width="1"/></svg>
<div class="t" style="left:332px;top:282px;font-size:12px;line-height:14px;color:#000;transform:scaleX(0.965);">Tenny</div>
<div class="t" style="left:476px;top:282px;font-size:12px;line-height:14px;color:#000;transform:scaleX(0.975);">Alstartz;</div>
<div class="t" style="left:620px;top:282px;font-size:12px;line-height:14px;color:#000;transform:scaleX(0.884);">8783468777</div>
<div class="t" style="left:906px;top:282px;font-size:12px;line-height:14px;color:#000;transform:scaleX(0.884);">8978673875</div>
<div class="a" style="left:269px;top:320px;width:921px;height:1px;background:#bcd6f8"></div>
<div class="a" style="left:272px;top:303px;width:13px;height:13px;background:#fff;border:1px solid #262626"></div>
<svg class="a" style="left:291px;top:303px;" width="16" height="12" viewBox="0 0 16 12"><rect x="0" y="0" width="16" height="12" fill="#c8c8c8"/><rect x="1" y="1" width="15" height="11" fill="#28306a"/><rect x="1" y="1" width="14" height="10" fill="#eef8fc"/><ellipse cx="5.2" cy="4.3" rx="2.2" ry="2.9" fill="#4a4a4a"/><path d="M5.6 2.8 Q6.6 4 5.6 6.2" stroke="#c8c8c8" stroke-width="0.9" fill="none"/><path d="M1.8 10.2 Q1.8 7.2 5.2 7.2 Q8.6 7.2 8.6 10.2 Q5.2 11.2 1.8 10.2 Z" fill="#e2561a"/><path d="M4.1 7.4 L5.2 9.2 L6.3 7.4" stroke="#a8200a" stroke-width="0.8" fill="none"/><path d="M10 4.5 H14 M10 6.5 H14 M10 8.5 H14" stroke="#6a8ae8" stroke-width="1"/></svg>
<div class="t" style="left:332px;top:304px;font-size:12px;line-height:14px;color:#000;transform:scaleX(0.965);">Vesko Sutovic</div>
<div class="t" style="left:476px;top:304px;font-size:12px;line-height:14px;color:#000;transform:scaleX(0.975);">Ocean Suites;</div>
<div class="t" style="left:620px;top:304px;font-size:12px;line-height:14px;color:#000;transform:scaleX(0.884);">9988677656</div>
<div class="t" style="left:906px;top:304px;font-size:12px;line-height:14px;color:#000;transform:scaleX(0.884);">3984973849</div>
<div class="a" style="left:269px;top:342px;width:921px;height:1px;background:#bcd6f8"></div>
<div class="a" style="left:272px;top:325px;width:13px;height:13px;background:#fff;border:1px solid #262626"></div>
<svg class="a" style="left:291px;top:325px;" width="16" height="12" viewBox="0 0 16 12"><rect x="0" y="0" width="16" height="12" fill="#c8c8c8"/><rect x="1" y="1" width="15" height="11" fill="#28306a"/><rect x="1" y="1" width="14" height="10" fill="#eef8fc"/><ellipse cx="5.2" cy="4.3" rx="2.2" ry="2.9" fill="#4a4a4a"/><path d="M5.6 2.8 Q6.6 4 5.6 6.2" stroke="#c8c8c8" stroke-width="0.9" fill="none"/><path d="M1.8 10.2 Q1.8 7.2 5.2 7.2 Q8.6 7.2 8.6 10.2 Q5.2 11.2 1.8 10.2 Z" fill="#e2561a"/><path d="M4.1 7.4 L5.2 9.2 L6.3 7.4" stroke="#a8200a" stroke-width="0.8" fill="none"/><path d="M10 4.5 H14 M10 6.5 H14 M10 8.5 H14" stroke="#6a8ae8" stroke-width="1"/></svg>
<div class="t" style="left:332px;top:326px;font-size:12px;line-height:14px;color:#000;transform:scaleX(0.965);">Jimmy Rob</div>
<div class="t" style="left:476px;top:326px;font-size:12px;line-height:14px;color:#000;transform:scaleX(0.975);">Rob Finance Firm;</div>
<div class="t" style="left:620px;top:326px;font-size:12px;line-height:14px;color:#000;transform:scaleX(0.884);">9878878786</div>
<div class="a" style="left:269px;top:364px;width:921px;height:1px;background:#bcd6f8"></div>
<div class="a" style="left:272px;top:347px;width:13px;height:13px;background:#fff;border:1px solid #262626"></div>
<svg class="a" style="left:291px;top:347px;" width="16" height="12" viewBox="0 0 16 12"><rect x="0" y="0" width="16" height="12" fill="#c8c8c8"/><rect x="1" y="1" width="15" height="11" fill="#28306a"/><rect x="1" y="1" width="14" height="10" fill="#eef8fc"/><ellipse cx="5.2" cy="4.3" rx="2.2" ry="2.9" fill="#4a4a4a"/><path d="M5.6 2.8 Q6.6 4 5.6 6.2" stroke="#c8c8c8" stroke-width="0.9" fill="none"/><path d="M1.8 10.2 Q1.8 7.2 5.2 7.2 Q8.6 7.2 8.6 10.2 Q5.2 11.2 1.8 10.2 Z" fill="#e2561a"/><path d="M4.1 7.4 L5.2 9.2 L6.3 7.4" stroke="#a8200a" stroke-width="0.8" fill="none"/><path d="M10 4.5 H14 M10 6.5 H14 M10 8.5 H14" stroke="#6a8ae8" stroke-width="1"/></svg>
<div class="t" style="left:332px;top:348px;font-size:12px;line-height:14px;color:#000;transform:scaleX(0.965);">Mimy Peavy</div>
<div class="t" style="left:476px;top:348px;font-size:12px;line-height:14px;color:#000;transform:scaleX(0.975);">Pearl Designers;</div>
<div class="t" style="left:620px;top:348px;font-size:12px;line-height:14px;color:#000;transform:scaleX(0.884);">9868767676</div>
<div class="a" style="left:269px;top:386px;width:921px;height:1px;background:#bcd6f8"></div>
<div class="a" style="left:272px;top:369px;width:13px;height:13px;background:#fff;border:1px solid #262626"></div>
<svg class="a" style="left:291px;top:369px;" width="16" height="12" viewBox="0 0 16 12"><rect x="0" y="0" width="16" height="12" fill="#c8c8c8"/><rect x="1" y="1" width="15" height="11" fill="#28306a"/><rect x="1" y="1" width="14" height="10" fill="#eef8fc"/><ellipse cx="5.2" cy="4.3" rx="2.2" ry="2.9" fill="#4a4a4a"/><path d="M5.6 2.8 Q6.6 4 5.6 6.2" stroke="#c8c8c8" stroke-width="0.9" fill="none"/><path d="M1.8 10.2 Q1.8 7.2 5.2 7.2 Q8.6 7.2 8.6 10.2 Q5.2 11.2 1.8 10.2 Z" fill="#e2561a"/><path d="M4.1 7.4 L5.2 9.2 L6.3 7.4" stroke="#a8200a" stroke-width="0.8" fill="none"/><path d="M10 4.5 H14 M10 6.5 H14 M10 8.5 H14" stroke="#6a8ae8" stroke-width="1"/></svg>
<div class="t" style="left:332px;top:370px;font-size:12px;line-height:14px;color:#000;transform:scaleX(0.965);">Misha Gold</div>
<div class="t" style="left:476px;top:370px;font-size:12px;line-height:14px;color:#000;transform:scaleX(0.975);">Gold Restaurant;</div>
<div class="t" style="left:620px;top:370px;font-size:12px;line-height:14px;color:#000;transform:scaleX(0.884);">9876589787</div>
<div class="a" style="left:617px;top:126px;width:43px;height:259px;background:rgba(255,255,255,0.97)"></div>
<div class="a" style="left:904px;top:127px;width:44px;height:189px;background:rgba(255,255,255,0.97)"></div>
<div class="a" style="left:1190px;top:105px;width:17px;height:286px;background:#f0f0f0;border-left:1px solid #fff"></div>
<div class="a" style="left:1191px;top:122px;width:15px;height:17px;background:#cdcdcd"></div>
<svg class="a" style="left:1194px;top:110px;" width="9" height="6" viewBox="0 0 9 6"><path d="M0.8 5.2 L4.5 1.3 L8.2 5.2" stroke="#4a4a4a" stroke-width="2" fill="none"/></svg>
<svg class="a" style="left:1194px;top:379px;" width="9" height="6" viewBox="0 0 9 6"><path d="M0.8 0.8 L4.5 4.7 L8.2 0.8" stroke="#4a4a4a" stroke-width="2" fill="none"/></svg>
<div class="a" style="left:265px;top:391px;width:942px;height:4px;background:#bcd7fb"></div>
<div class="a" style="left:269px;top:395px;width:921px;height:306px;background:#e3eeff"></div>
<div class="t" style="left:273px;top:398px;font-size:11px;line-height:14px;color:#4a82c4;transform:scaleX(0.965);">Personal Details:</div>
<div class="a" style="left:358px;top:405px;width:371px;height:1px;background:#3a76b8"></div>
<div class="t" style="left:273px;top:410px;font-size:11px;line-height:14px;color:#000;transform:scaleX(0.99);">Name:</div>
<div class="a" style="left:409px;top:412px;width:317px;height:18px;background:#fff;border-top:1px solid #646464;border-left:1px solid #646464;border-bottom:1px solid #e6e6e6;border-right:1px solid #e6e6e6;box-shadow:inset 1px 1px 0 #8c8c8c"></div>
<div class="t" style="left:273px;top:433px;font-size:11px;line-height:14px;color:#000;transform:scaleX(0.99);">Nick Name:</div>
<div class="a" style="left:409px;top:435px;width:317px;height:18px;background:#fff;border-top:1px solid #646464;border-left:1px solid #646464;border-bottom:1px solid #e6e6e6;border-right:1px solid #e6e6e6;box-shadow:inset 1px 1px 0 #8c8c8c"></div>
<div class="t" style="left:273px;top:456px;font-size:11px;line-height:14px;color:#000;transform:scaleX(0.99);">Birth Date:</div>
<div class="a" style="left:409px;top:458px;width:317px;height:18px;background:#fff;border-top:1px solid #646464;border-left:1px solid #646464;border-bottom:1px solid #e6e6e6;border-right:1px solid #e6e6e6;box-shadow:inset 1px 1px 0 #8c8c8c"></div>
<div class="t" style="left:273px;top:479px;font-size:11px;line-height:14px;color:#000;transform:scaleX(0.99);">Spouse:</div>
<div class="a" style="left:409px;top:481px;width:317px;height:18px;background:#fff;border-top:1px solid #646464;border-left:1px solid #646464;border-bottom:1px solid #e6e6e6;border-right:1px solid #e6e6e6;box-shadow:inset 1px 1px 0 #8c8c8c"></div>
<div class="t" style="left:273px;top:502px;font-size:11px;line-height:14px;color:#000;transform:scaleX(0.99);">Anniversary</div>
<div class="a" style="left:409px;top:504px;width:317px;height:18px;background:#fff;border-top:1px solid #646464;border-left:1px solid #646464;border-bottom:1px solid #e6e6e6;border-right:1px solid #e6e6e6;box-shadow:inset 1px 1px 0 #8c8c8c"></div>
<div class="t" style="left:410px;top:415px;font-size:11px;line-height:14px;color:#000;transform:scaleX(0.977);">Avery Robinson</div>
<svg class="a" style="left:733px;top:403px;" width="112" height="118" viewBox="0 0 112 118">
<defs>
<linearGradient id="cg" x1="0" y1="0" x2="0" y2="1"><stop offset="0" stop-color="#fbfbfb"/><stop offset="1" stop-color="#eaeaea"/></linearGradient>
<radialGradient id="bg" cx="0.5" cy="0.5" r="0.5"><stop offset="0" stop-color="#10c4ff"/><stop offset="0.6" stop-color="#08a8f8"/><stop offset="1" stop-color="#0a78e0"/></radialGradient>
<radialGradient id="sk" cx="0.5" cy="0.4" r="0.65"><stop offset="0" stop-color="#fde6cc"/><stop offset="0.7" stop-color="#f0c8a0"/><stop offset="1" stop-color="#c89060"/></radialGradient>
<clipPath id="hc"><rect x="3.5" y="4.5" width="95" height="29.5"/></clipPath>
</defs>
<rect x="1.5" y="2.5" width="98" height="101" fill="url(#cg)" stroke="#a8a8a8" stroke-width="1.2"/>
<rect x="3.5" y="4.5" width="95" height="29.5" fill="#0808c8"/>
<g clip-path="url(#hc)"><circle cx="53.5" cy="4.3" r="45.5" fill="url(#bg)"/><circle cx="52" cy="5" r="8.5" fill="#7fb4f8"/></g>
<path d="M77 19 h6 l-1 -3 h-4 z M80 15.5 a2 2 0 1 0 0.1 0" fill="#e8f4ff"/>
<g fill="#9fd0ff"><circle cx="86" cy="14" r="0.7"/><circle cx="90" cy="14" r="0.7"/><circle cx="86" cy="18" r="0.7"/><circle cx="90" cy="18" r="0.7"/><circle cx="78" cy="22.5" r="0.7"/><circle cx="82" cy="22.5" r="0.7"/><circle cx="86" cy="22.5" r="0.7"/><circle cx="90" cy="22.5" r="0.7"/><circle cx="78" cy="26.5" r="0.7"/><circle cx="82" cy="26.5" r="0.7"/><circle cx="86" cy="26.5" r="0.7"/><circle cx="90" cy="26.5" r="0.7"/><circle cx="94" cy="26.5" r="0.7"/></g>
<g fill="#cc10c8"><rect x="6" y="42" width="7" height="3.2"/><rect x="6" y="57.3" width="7" height="3.2"/><rect x="6" y="72.6" width="7" height="3.2"/><rect x="6" y="88" width="7" height="3.2"/></g>
<path d="M27 43.5 H95 M27 58.5 H95 M27 74 H95 M27 89.5 H95" stroke="#2c2c2c" stroke-width="1.7"/>
<path d="M89 93 L99 83 L99 93 Z" fill="#d8d8d8"/>
<path d="M46 115.5 Q45 104 50.5 97 Q56 90 66 87 L70 85.5 H84 L88 87 Q98 90 103.5 97 Q109 104 108 115.5 Q77 121 46 115.5 Z" fill="#e40000"/>
<path d="M47 113.5 Q77 118.5 107 113.5 L108 115.5 Q77 121 46 115.5 Z" fill="#7a1a10" opacity="0.5"/>
<path d="M68.5 74 L85 74 L85 87 Q77 90 68.5 87 Z" fill="#e6cbb0"/>
<path d="M73 84 L81 84 L79 89.5 L75 89.5 Z" fill="#c0a030"/>
<path d="M63.5 56 Q63 43.5 76.8 43 Q90.5 43.5 90 56 Q90 68 82.5 76 Q78.5 79.5 76.8 79.5 Q75 79.5 71 76 Q63.5 68 63.5 56 Z" fill="url(#sk)"/>
<path d="M62.5 60 Q60.5 35.5 76.5 35.2 Q92.5 35.5 90.5 60 Q89.8 52 87.5 49.5 Q83 47 76.5 47.5 Q69 47.5 65.5 50.5 Q63.3 53 62.5 60 Z" fill="#a01a14"/>
<circle cx="80" cy="41.8" r="4.2" fill="#c8a890" stroke="#b89028" stroke-width="1.8"/>
</svg>
<div class="t" style="left:273px;top:527px;font-size:11px;line-height:14px;color:#4a82c4;transform:scaleX(0.965);">Contact Details:</div>
<div class="a" style="left:358px;top:534px;width:371px;height:1px;background:#3a76b8"></div>
<div class="t" style="left:732px;top:528px;font-size:11px;line-height:14px;color:#4a82c4;transform:scaleX(0.97);">Note:</div>
<div class="a" style="left:792px;top:534px;width:349px;height:1px;background:#3a76b8"></div>
<div class="a" style="left:272px;top:543px;width:132px;height:21px;background:#e1e1e1;border:1px solid #adadad"></div>
<div class="t" style="left:276px;top:547px;font-size:11px;line-height:14px;color:#000;transform:scaleX(0.98);">Primary Phone:</div>
<svg class="a" style="left:391px;top:551px;" width="9" height="6" viewBox="0 0 9 6"><path d="M0.5 0.8 L4.5 4.8 L8.5 0.8" stroke="#404040" stroke-width="1.1" fill="none"/></svg>
<div class="a" style="left:409px;top:543px;width:317px;height:19px;background:#fff;border-top:1px solid #646464;border-left:1px solid #646464;border-bottom:1px solid #e6e6e6;border-right:1px solid #e6e6e6;box-shadow:inset 1px 1px 0 #8c8c8c"></div>
<div class="t" style="left:273px;top:567px;font-size:11px;line-height:14px;color:#4a82c4;transform:scaleX(0.965);">Address:</div>
<div class="a" style="left:322px;top:574px;width:407px;height:1px;background:#3a76b8"></div>
<div class="a" style="left:272px;top:583px;width:132px;height:21px;background:#e1e1e1;border:1px solid #adadad"></div>
<div class="t" style="left:276px;top:587px;font-size:11px;line-height:14px;color:#000;transform:scaleX(0.98);">Home:</div>
<svg class="a" style="left:391px;top:591px;" width="9" height="6" viewBox="0 0 9 6"><path d="M0.5 0.8 L4.5 4.8 L8.5 0.8" stroke="#404040" stroke-width="1.1" fill="none"/></svg>
<div class="a" style="left:409px;top:582px;width:317px;height:67px;background:#fff;border-top:1px solid #646464;border-left:1px solid #646464;border-bottom:1px solid #e6e6e6;border-right:1px solid #e6e6e6;box-shadow:inset 1px 1px 0 #8c8c8c"></div>
<div class="a" style="left:731px;top:547px;width:456px;height:131px;background:#fff;border-top:1px solid #646464;border-left:1px solid #646464;border-bottom:1px solid #e6e6e6;border-right:1px solid #e6e6e6;box-shadow:inset 1px 1px 0 #8c8c8c"></div>
<div class="t" style="left:273px;top:654px;font-size:11px;line-height:14px;color:#4a82c4;transform:scaleX(0.965);">Emails:</div>
<div class="a" style="left:311px;top:661px;width:418px;height:1px;background:#3a76b8"></div>
<div class="a" style="left:407px;top:667px;width:320px;height:40px;background:#fff;border-top:1px solid #646464;border-left:1px solid #646464;border-bottom:1px solid #e6e6e6;border-right:1px solid #e6e6e6;box-shadow:inset 1px 1px 0 #8c8c8c"></div>
<div class="t" style="left:410px;top:670px;font-size:11px;line-height:14px;color:#000;transform:scaleX(0.98);">avery@gmail.com</div>
<div class="t" style="left:736px;top:688px;font-size:11px;line-height:14px;color:#000;transform:scaleX(0.98);">URL:</div>
<div class="a" style="left:870px;top:686px;width:317px;height:20px;background:#fff;border-top:1px solid #646464;border-left:1px solid #646464;border-bottom:1px solid #e6e6e6;border-right:1px solid #e6e6e6;box-shadow:inset 1px 1px 0 #8c8c8c"></div>
<div class="a" style="left:1190px;top:395px;width:17px;height:306px;background:#f0f0f0;border-left:1px solid #fff"></div>
<div class="a" style="left:1191px;top:412px;width:15px;height:166px;background:#cdcdcd"></div>
<svg class="a" style="left:1194px;top:401px;" width="9" height="6" viewBox="0 0 9 6"><path d="M0.8 5.2 L4.5 1.3 L8.2 5.2" stroke="#4a4a4a" stroke-width="2" fill="none"/></svg>
<svg class="a" style="left:1194px;top:689px;" width="9" height="6" viewBox="0 0 9 6"><path d="M0.8 0.8 L4.5 4.7 L8.2 0.8" stroke="#4a4a4a" stroke-width="2" fill="none"/></svg>
<div class="a" style="left:0px;top:701px;width:1207px;height:25px;background:#bfdbff"></div>
<div class="t" style="left:9px;top:707px;font-size:12px;line-height:14px;color:#1c1c9c;transform:scaleX(0.95);">430 Items</div>
<div class="a" style="left:0px;top:664px;width:1207px;height:26px;background:rgba(255,255,255,0.55);border-top:1px solid rgba(190,195,200,0.45);border-bottom:1px solid rgba(180,185,190,0.45)"></div>
<div class="t" style="left:1042px;top:664px;font-size:20px;line-height:24px;color:#939393;transform:scaleX(1.01)">Color<span style="color:#f6b48a">Mango</span>.com</div>
</body></html>
